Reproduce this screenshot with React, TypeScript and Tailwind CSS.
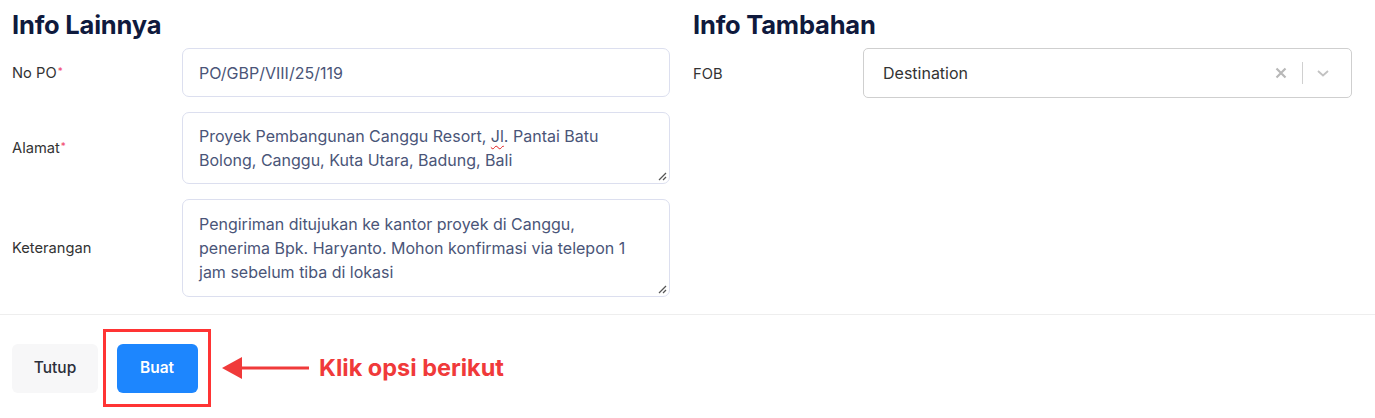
import React from "react";

const Req = () => <sup className="text-[#f0436b] text-[10px] ml-[1px] relative top-[-3px]">*</sup>;

function ResizeGrip() {
  return (
    <svg className="absolute right-[2px] bottom-[2px]" width="10" height="10" viewBox="0 0 10 10">
      <line x1="9" y1="2" x2="2" y2="9" stroke="#555" strokeWidth="1.2" />
      <line x1="9" y1="6" x2="6" y2="9" stroke="#555" strokeWidth="1.2" />
    </svg>
  );
}

export default function App() {
  return (
    <div className="w-[1375px] h-[418px] bg-white overflow-hidden" style={{ fontFamily: "Inter, 'Noto Sans', sans-serif" }}>
      <div className="flex pt-[9px]">
        {/* Left column */}
        <div className="w-[693px] pl-[12px] pr-[23px]">
          <h2 className="text-[25.5px] font-bold text-[#0f1a3d] leading-[31px] tracking-[-0.2px]">Info Lainnya</h2>
          <div className="mt-[8px] flex flex-col gap-[15px]">
            <div className="flex items-start">
              <div className="w-[170px] pt-[14px] text-[14.7px] text-[#333]">No PO<Req /></div>
              <div className="flex-1 h-[49px] border border-[#dcdfef] rounded-[7px] px-[16px] flex items-center text-[16px] text-[#4a5578]">
                PO/GBP/VIII/25/119
              </div>
            </div>
            <div className="flex items-center">
              <div className="w-[170px] text-[14.7px] text-[#333]">Alamat<Req /></div>
              <div className="relative flex-1 h-[72px] border border-[#dcdfef] rounded-[7px] px-[16px] pt-[11px] text-[16px] leading-[24px] text-[#4a5578]">
                Proyek Pembangunan Canggu Resort,{" "}
                <span className="underline decoration-wavy decoration-[#e02020] decoration-[1px] underline-offset-[3px]">Jl</span>. Pantai Batu
                <br />
                Bolong, Canggu, Kuta Utara, Badung, Bali
                <ResizeGrip />
              </div>
            </div>
            <div className="flex items-center">
              <div className="w-[170px] text-[14.7px] text-[#333]">Keterangan</div>
              <div className="relative flex-1 h-[98px] border border-[#dcdfef] rounded-[7px] px-[16px] pt-[12px] text-[16px] leading-[24px] text-[#4a5578]">
                Pengiriman ditujukan ke kantor proyek di Canggu,
                <br />
                penerima Bpk. Haryanto. Mohon konfirmasi via telepon 1
                <br />
                jam sebelum tiba di lokasi
                <ResizeGrip />
              </div>
            </div>
          </div>
        </div>
        {/* Right column */}
        <div className="flex-1 pr-[23px]">
          <h2 className="text-[25.5px] font-bold text-[#0f1a3d] leading-[31px] tracking-[-0.2px]">Info Tambahan</h2>
          <div className="mt-[8px] flex items-start">
            <div className="w-[170px] pt-[15px] text-[14.7px] text-[#333]">FOB</div>
            <div className="flex-1 h-[50px] border border-[#cfcfcf] rounded-[5px] pl-[19px] pr-[21px] flex items-center">
              <span className="flex-1 text-[16px] text-[#333]">Destination</span>
              <svg width="12" height="12" viewBox="0 0 12 12" className="mr-[15px]">
                <path d="M1.5 1.5 L10.5 10.5 M10.5 1.5 L1.5 10.5" stroke="#b8b8b8" strokeWidth="2.2" />
              </svg>
              <div className="w-[1px] h-[22px] bg-[#d0d0d0] mr-[13px]" />
              <svg width="14" height="10" viewBox="0 0 14 10">
                <path d="M2 3 L7 7.5 L12 3" stroke="#c2c2c2" strokeWidth="1.8" fill="none" />
              </svg>
            </div>
          </div>
        </div>
      </div>
      {/* Divider */}
      <div className="mt-[17px] h-[1px] bg-[#eeeeee]" />
      {/* Footer */}
      <div className="flex items-center pl-[12px] pt-[14px]">
        <button className="w-[86px] h-[49px] rounded-[6px] bg-[#f7f7f8] text-[15.5px] font-medium text-[#2b2f3a]">Tutup</button>
        <div className="ml-[5px] w-[108px] h-[78px] border-[3px] border-[#ff3434] flex items-center justify-center">
          <button className="w-[81px] h-[49px] rounded-[6px] bg-[#1d86fe] text-[15.5px] font-semibold text-white">Buat</button>
        </div>
        <svg width="96" height="26" viewBox="0 0 96 26" className="ml-[10px]">
          <path d="M20 11.5 H88 V14.5 H20 Z" fill="#f03a3a" />
          <path d="M1 13 L21 2 L21 24 Z" fill="#f03a3a" />
        </svg>
        <span className="ml-[2px] text-[23.5px] font-bold text-[#f03a3a]">Klik opsi berikut</span>
      </div>
    </div>
  );
}
